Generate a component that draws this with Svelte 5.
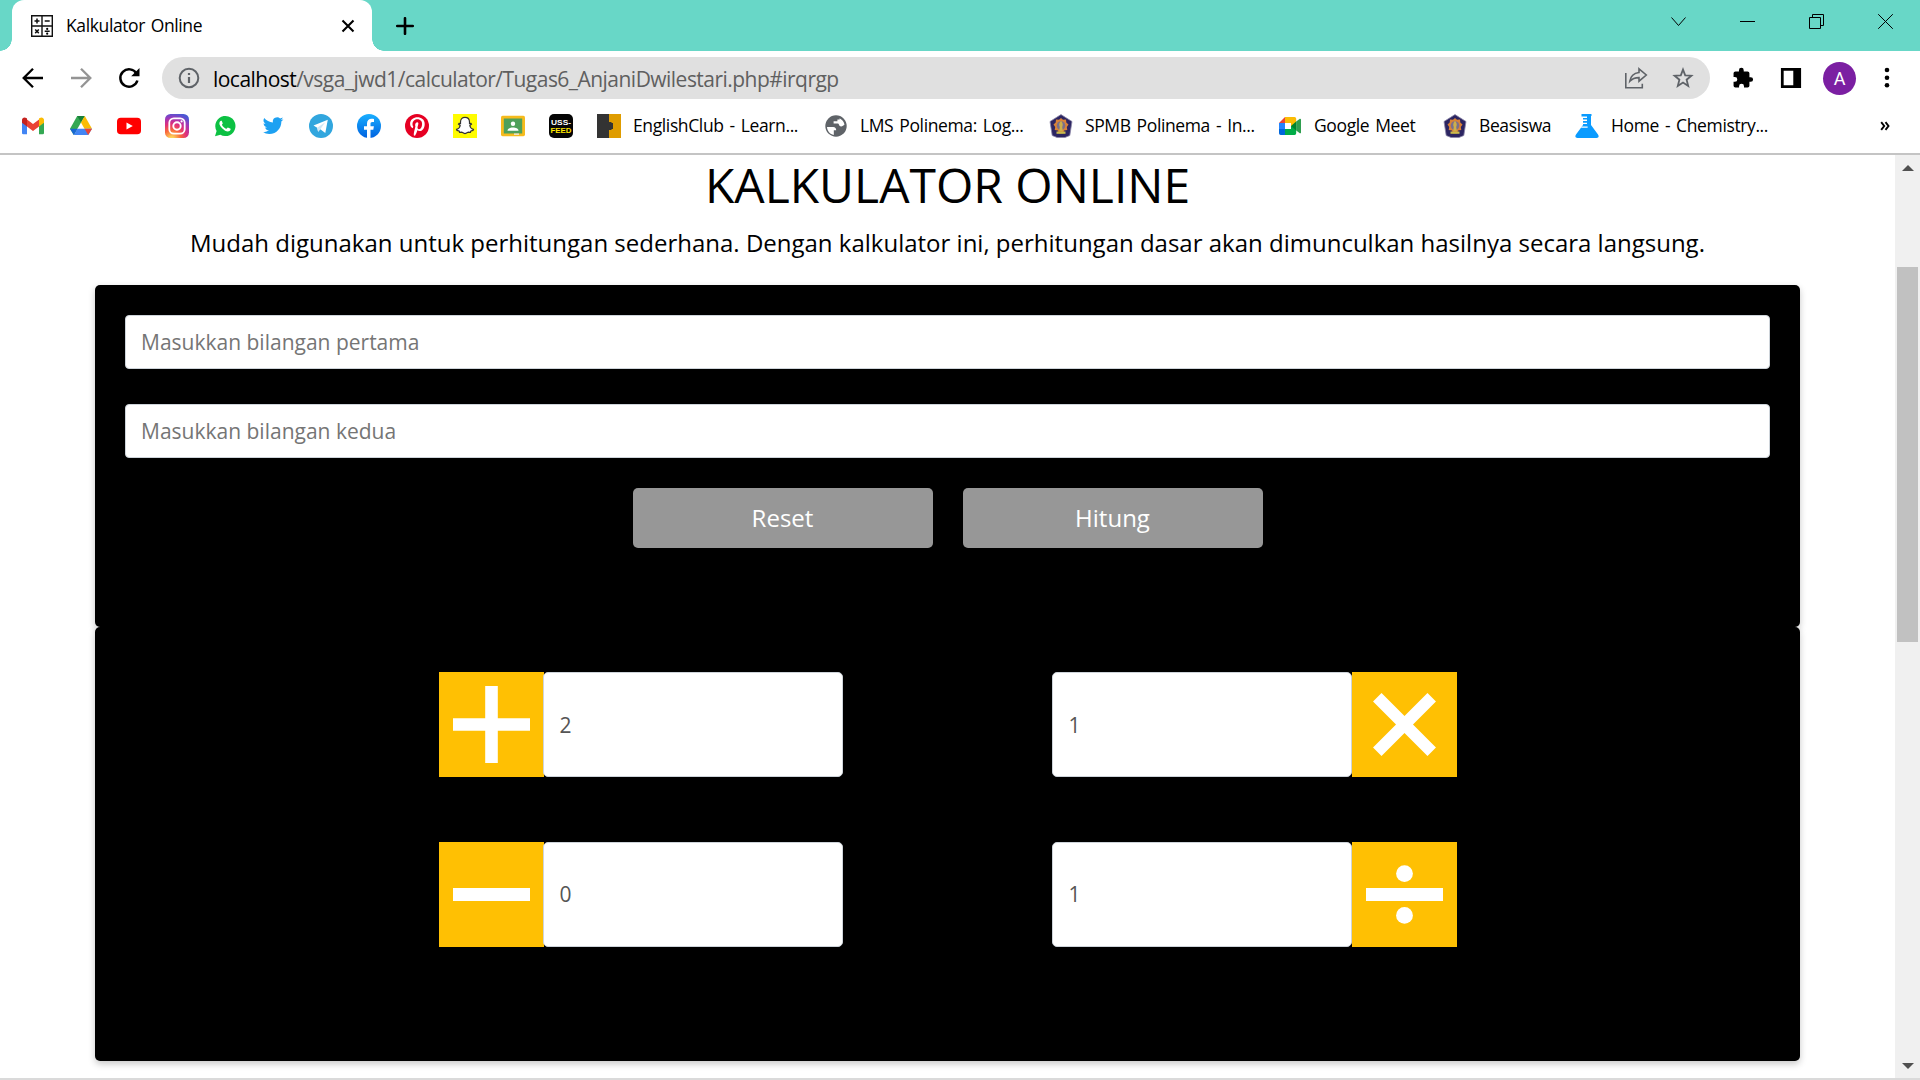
<script>
  const shortcuts = ['gmail', 'drive', 'youtube', 'instagram', 'whatsapp', 'twitter', 'telegram', 'facebook', 'pinterest', 'snapchat', 'classroom', 'uss'];

  const bookmarks = [
    { icon: 'english', label: 'EnglishClub - Learn...', size: 'w191' },
    { icon: 'globe', label: 'LMS Polinema: Log...', size: 'w189' },
    { icon: 'polinema', label: 'SPMB Polinema - In...', size: 'w193' },
    { icon: 'meet', label: 'Google Meet', size: 'w129' },
    { icon: 'polinema', label: 'Beasiswa', size: 'w96' },
    { icon: 'flask', label: 'Home - Chemistry...', size: 'w170' }
  ];

  const rows = [
    [{ op: 'plus', value: '2' }, { op: 'times', value: '1' }],
    [{ op: 'minus', value: '0' }, { op: 'divide', value: '1' }]
  ];

  let first = $state('');
  let second = $state('');
</script>

{#snippet siteIcon(name)}
  <svg class="site-icon" viewBox="0 0 24 24" aria-hidden="true">
    {#if name === 'gmail'}
      <path d="M1 6v13a1.3 1.3 0 0 0 1.3 1.3H6V10z" fill="#4285f4" />
      <path d="M18 10v10.300h3.700A1.300 1.300 0 0 0 23 19V6z" fill="#34a853" />
      <path d="M6 5.500v7L12 17l6-4.500v-7L12 10z" fill="#ea4335" />
      <path d="M1 6c0-2.400 2.600-3.300 4.300-2L6 4.600v7.900L1 8.700z" fill="#c5221f" />
      <path d="M23 6c0-2.400-2.600-3.300-4.300-2l-.7.6v7.900l5-3.800z" fill="#fbbc04" />
    {:else if name === 'drive'}
      <path d="M8.200 2h7.600L12 8.600 4.800 21 1 14.700z" fill="#34a853" />
      <path d="M8.200 2h7.600L12 8.600z" fill="#188038" />
      <path d="M15.800 2 23 14.700h-7.500L12 8.600z" fill="#fbbc04" />
      <path d="M8.500 14.700H23L19.200 21H4.800z" fill="#4285f4" />
      <path d="M15.500 14.700H23L19.200 21z" fill="#ea4335" />
      <path d="M1 14.700h7.500L4.800 21z" fill="#1967d2" />
    {:else if name === 'youtube'}
      <rect x="0" y="3.700" width="24" height="16.600" rx="3.800" fill="#ff0000" />
      <path d="m9.500 8.400 6.300 3.600-6.300 3.600z" fill="#fff" />
    {:else if name === 'instagram'}
      <defs>
        <radialGradient id="ig" cx=".28" cy="1.05" r="1.100">
          <stop offset=".08" stop-color="#fdd35a" />
          <stop offset=".35" stop-color="#f9683b" />
          <stop offset=".58" stop-color="#df2f7b" />
          <stop offset=".8" stop-color="#a136b8" />
          <stop offset="1" stop-color="#4b58d4" />
        </radialGradient>
      </defs>
      <rect width="24" height="24" rx="5.500" fill="url(#ig)" />
      <rect x="4.300" y="4.300" width="15.400" height="15.400" rx="4.500" fill="none" stroke="#fff" stroke-width="1.800" />
      <circle cx="12" cy="12" r="3.700" fill="none" stroke="#fff" stroke-width="1.900" />
      <circle cx="16.600" cy="7.400" r="1.100" fill="#fff" />
    {:else if name === 'whatsapp'}
      <path d="M2 22.200 3.600 17A10.100 10.100 0 1 1 7.400 20.800z" fill="#0cc143" />
      <path d="M8.300 6.700c-.4 0-1 .2-1.400.8-1.200 1.700-.5 4 2.200 6.700s5.400 4 7.400 2.800c.9-.5 1.300-1.500 1.100-2.200l-2.700-1.400c-.4-.1-.8.8-1.400 1.300-.6.200-3.900-2-4.600-4 .4-.6 1-1.100.8-1.500l-1-2.500z" fill="#fff" />
    {:else if name === 'twitter'}
      <path transform="translate(1.800 1.300) scale(.86)" d="M23.950 4.570a10 10 0 0 1-2.820.77 4.960 4.960 0 0 0 2.160-2.720c-.95.550-2 .95-3.130 1.190a4.920 4.920 0 0 0-8.380 4.480C7.690 8.100 4.070 6.130 1.640 3.160a4.920 4.920 0 0 0 1.520 6.570 4.900 4.900 0 0 1-2.230-.61v.06c0 2.380 1.700 4.370 3.950 4.820a5 5 0 0 1-2.210.08 4.940 4.940 0 0 0 4.600 3.420A9.870 9.870 0 0 1 0 19.540a13.990 13.990 0 0 0 7.550 2.210c9.050 0 14-7.500 14-13.980l-.02-.64a9.940 9.940 0 0 0 2.420-2.560z" fill="#1da1f2" />
    {:else if name === 'telegram'}
      <circle cx="12" cy="12" r="12" fill="#31a6de" />
      <path d="M4.500 11.500 18.800 5.700 16.300 19l-5-3.700-2.200 2.500-.9-4.100z" fill="#fff" />
      <path d="m8.200 13.700 8-5.400-4.900 7-2.200 2.500z" fill="#cfe7f5" />
    {:else if name === 'facebook'}
      <defs>
        <linearGradient id="fb" x2="0" y2="1"><stop stop-color="#19afff" /><stop offset="1" stop-color="#0062e0" /></linearGradient>
      </defs>
      <circle cx="12" cy="12" r="12" fill="url(#fb)" />
      <path d="M10 24v-8.300H7v-3.500h3V9.600c0-3.100 1.900-4.800 4.600-4.800.9 0 1.800.1 2.400.3v3h-1.600c-1.500 0-1.900.8-1.900 1.900v2.200h3.400l-.6 3.500h-2.800V24z" fill="#fff" />
    {:else if name === 'pinterest'}
      <circle cx="12" cy="12" r="12" fill="#e60023" />
      <path d="M8.900 21.500c-.3-2 .1-3.300 1.500-9 -.7-1.800.1-4.200 1.800-4.200 2.700 0-.2 4.500.4 6 .7 1.900 4.500.9 4.500-4.300 0-6.200-9.600-6.200-9.600.2 0 1.100.3 1.700.8 2.400l-.5 1.700c-1.800-.7-2.700-2.500-2.700-4.500 0-8.500 14.600-8.900 14.600.2 0 6.200-4.400 8.500-7.400 6.300-.4 2-1.400 4.200-2.300 5.500z" fill="#fff" />
    {:else if name === 'snapchat'}
      <rect width="24" height="24" fill="#fffc00" />
      <path d="M12 3.300c-2.800 0-4.500 1.900-4.500 4.600v1.700l-1.400-.3-.6.900 1.700 1.300c-.3 1.800-1.800 3.300-3.600 3.900l.4 1 2.100.6.500 1.300 2.200-.1c1.200.8 2 1.400 3.200 1.400s2-.6 3.200-1.400l2.200.1.500-1.300 2.100-.6.400-1c-1.800-.6-3.300-2.100-3.600-3.900l1.700-1.300-.6-.9-1.400.3V7.900c0-2.700-1.700-4.600-4.500-4.600z" fill="#fff" stroke="#333" stroke-width="1.200" />
    {:else if name === 'classroom'}
      <rect y="1.800" width="24" height="20.400" rx="1.600" fill="#f6bb1d" />
      <rect x="2.800" y="4.500" width="18.400" height="15" fill="#4fa05a" />
      <circle cx="12" cy="9.700" r="2.200" fill="#fff" />
      <path d="M6.500 16.700c0-4.200 11-4.200 11 0z" fill="#fff" />
      <path d="M13 19.500h5v1.300h-5z" fill="#eee" />
    {:else if name === 'uss'}
      <rect width="24" height="24" rx="5" fill="#050505" />
      <text x="12" y="11" text-anchor="middle" textLength="20" lengthAdjust="spacingAndGlyphs" class="uss-text" fill="#fff">USS-</text>
      <text x="12" y="18.800" text-anchor="middle" textLength="21" lengthAdjust="spacingAndGlyphs" class="uss-text" fill="#ffe600">FEED</text>
    {:else if name === 'english'}
      <path d="M0 0h24v24H0z" fill="#df9c00" />
      <path d="M0 0h12v8h2.500v1H16v6h-1.500v1H12v8H0z" fill="#333" />
    {:else if name === 'globe'}
      <circle cx="12" cy="12" r="10.700" fill="#5f6368" />
      <path d="M3 13h6.200c2 0 3 1.300 3 3.200H9.800v4.700C6 20.200 3.200 17 3 13zM15.600 4.300c2.400 1.300 4.300 3.500 4.900 6.300-1.300 1.800-3.800 2.400-5 1.200-.7-.7-.4-1.800-1.400-2.200H9.600V7.300h3.800V5.400h2.200z" fill="#fff" />
    {:else if name === 'polinema'}
      <path d="M12 .6 23 7.500 20.800 21.500 16 23.500H8l-4.800-2L1 7.500z" fill="#2c2562" stroke="#8d88a8" stroke-width=".8" />
      <path d="m12 4 2 1.800 3-.3.300 3 2.200 2-1.700 2.400.5 3-3.200.7-1.100 2.700h-4l-1.100-2.700-3.200-.7.500-3-1.700-2.400 2.200-2 .3-3 3 .3z" fill="#d98238" />
      <circle cx="12" cy="11.600" r="4.300" fill="#7a6f8c" />
      <path d="M12 6.700c2.100 2.200 2.100 4.500 1.200 6.200L13.800 17h-3.600l.6-4.100C9.900 11.200 9.900 8.900 12 6.700z" fill="#cdb04a" />
      <path d="M7.500 17.500h9v2.300h-9z" fill="#cbbb4c" />
    {:else if name === 'meet'}
      <path d="M1 9 7 3v6z" fill="#ea4335" />
      <path d="M7 3h9.500A1.700 1.700 0 0 1 18.200 4.700V12H13V9H7z" fill="#fbbc04" />
      <path d="M1 9h6v6H1z" fill="#2684fc" />
      <path d="M1 15h6v6H2.700A1.700 1.700 0 0 1 1 19.300z" fill="#0066da" />
      <path d="M7 15h6v-3h5.200v7.300a1.700 1.700 0 0 1-1.700 1.700H7z" fill="#00ac47" />
      <path d="M7 9h6v6H7z" fill="#fff" />
      <path d="m18.200 7.600 3.300-2.700c.7-.6 1.500-.1 1.500.7v12.800c0 .8-.8 1.300-1.500.7l-3.300-2.700z" fill="#2f9e4f" />
      <path d="M18.200 7.600v8.800L13 12z" fill="#00832d" />
    {:else if name === 'flask'}
      <path d="M6.500 0h10v2H16v9l7 9.500c1.400 2.300.3 3.500-1.500 3.500h-19C.7 24-.4 22.800 1 20.500L8 11v-1h4V8.800H8V7h4V5.500H8V4h4V2.500H6.500z" fill="#0a9bff" />
      <path d="M6.800 12.500h5.800v1.200H6z" fill="#fff" />
    {/if}
  </svg>
{/snippet}

<div class="window">
  <header>
    <div class="tabstrip">
      <div class="tab">
        <svg class="tab-icon" viewBox="0 0 24 24" aria-hidden="true">
          <path d="M1.700 1.700h20.600v20.600H1.700zM12 1.700v20.600M1.700 12h20.600" fill="none" stroke="#111" stroke-width="1.400" />
          <path d="M4.500 7h5M7 4.500v5M14.700 7h5M5.200 15.500l3.600 3.600m0-3.600-3.600 3.600M14.700 17.300h5" fill="none" stroke="#111" stroke-width="1.500" />
          <circle cx="17.200" cy="14.900" r="1.100" /><circle cx="17.200" cy="19.700" r="1.100" />
        </svg>
        <span class="tab-title">Kalkulator Online</span>
        <svg class="tab-close" viewBox="0 0 14 14" aria-label="Close tab"><path d="m1.500 1.500 11 11m0-11-11 11" stroke="#000" stroke-width="2.100" /></svg>
      </div>
      <svg class="new-tab" viewBox="0 0 18 18" aria-label="New tab"><path d="M9 1.200v15.600M1.200 9h15.600" stroke="#000" stroke-width="2.600" stroke-linecap="round" /></svg>
      <div class="window-controls">
        <svg viewBox="0 0 15 15"><path d="m.5 3.500 7 8 7-8" /></svg>
        <svg viewBox="0 0 15 15"><path d="M0 7.500h15" /></svg>
        <svg viewBox="0 0 15 15"><path d="M.5 3.500h11v11H.5zM3.500 3.500v-3h11v11h-3" /></svg>
        <svg viewBox="0 0 15 15"><path d="m.2.2 14.600 14.600m0-14.600L.2 14.800" /></svg>
      </div>
    </div>

    <div class="toolbar">
      <svg class="nav" viewBox="0 0 24 24" aria-label="Back"><path d="M22 12H3.500M12 2.700 2.700 12l9.300 9.300" fill="none" stroke="#000" stroke-width="2.300" /></svg>
      <svg class="nav" viewBox="0 0 24 24" aria-label="Forward"><path d="M2 12h18.500M12 2.700l9.300 9.300-9.300 9.300" fill="none" stroke="#949494" stroke-width="2.300" /></svg>
      <svg class="nav" viewBox="0 0 24 24" aria-label="Reload">
        <path d="M19.500 7.500A8.700 8.700 0 1 0 20.400 14.500" fill="none" stroke="#000" stroke-width="2.500" />
        <path d="M22.500 2v8.300h-8.300z" />
      </svg>
      <div class="omnibox">
        <svg class="info" viewBox="0 0 24 24"><circle cx="12" cy="12" r="9.300" fill="none" stroke="#5f6368" stroke-width="2" /><path d="M12 11v6M12 7v2.100" stroke="#5f6368" stroke-width="2.200" /></svg>
        <span class="url"><span class="host">localhost</span>/vsga_jwd1/calculator/Tugas6_AnjaniDwilestari.php#irqrgp</span>
        <svg class="share" viewBox="0 0 24 24" fill="none" stroke="#5f6368" stroke-width="1.600"><path d="M1.800 7v14.700h16.500v-4" /><path d="M15 2.800 22.300 9 15 15.200v-3.600c-4.300 0-6.800 1-9.200 3.600.8-5 3.800-8 9.200-8.700z" /></svg>
        <svg class="star" viewBox="0 0 24 24" fill="none" stroke="#5f6368" stroke-width="1.800"><path d="m12 3.600 2.200 5.700 6.200.4-4.800 4 1.600 6.300-5.200-3.500L6.800 20l1.600-6.300-4.800-4 6.200-.4z" /></svg>
      </div>
      <svg class="action" viewBox="0 0 24 24"><path d="M20.500 11.200H19V6.800a2 2 0 0 0-2-2h-4.200V3.500a2.600 2.600 0 0 0-5.200 0v1.300H3.700a2 2 0 0 0-2 2v4h1.400a2.700 2.700 0 0 1 0 5.400H1.700v4.200a2 2 0 0 0 2 2h4v-1.500a2.700 2.700 0 0 1 5.400 0v1.500H17a2 2 0 0 0 2-2v-4.200h1.500a2.500 2.500 0 0 0 0-5z" /></svg>
      <svg class="action" viewBox="0 0 24 24"><path d="M1 1h22v22H1zM4 4v16h10.500V4z" fill-rule="evenodd" /></svg>
      <span class="avatar">A</span>
      <svg class="dots" viewBox="0 0 6 24"><circle cx="3" cy="4" r="2.300" /><circle cx="3" cy="11.700" r="2.300" /><circle cx="3" cy="19.300" r="2.300" /></svg>
    </div>

    <nav class="bookmarks">
      {#each shortcuts as name}
        <span class="shortcut">{@render siteIcon(name)}</span>
      {/each}
      {#each bookmarks as b}
        <span class="bookmark">{@render siteIcon(b.icon)}<span class="label {b.size}">{b.label}</span></span>
      {/each}
      <svg class="more" viewBox="0 0 10 10"><path d="m1.200 1.200 3 3.800-3 3.800M5.500 1.200l3 3.800-3 3.800" fill="none" stroke="#000" stroke-width="1.900" /></svg>
    </nav>
  </header>

  <div class="viewport">
    <main>
      <h1>KALKULATOR ONLINE</h1>
      <p>Mudah digunakan untuk perhitungan sederhana. Dengan kalkulator ini, perhitungan dasar akan dimunculkan hasilnya secara langsung.</p>

      <section class="card form">
        <input placeholder="Masukkan bilangan pertama" bind:value={first} />
        <input placeholder="Masukkan bilangan kedua" bind:value={second} />
        <div class="buttons">
          <button type="button">Reset</button>
          <button type="button">Hitung</button>
        </div>
      </section>

      <section class="card results">
        {#each rows as row}
          <div class="row">
            {#each row as cell, i}
              <div class="result" class:flip={i === 1}>
                <svg class="op" viewBox="0 0 105 105" aria-label={cell.op}>
                  <rect width="105" height="105" fill="#ffc003" />
                  <g fill="#fff">
                    {#if cell.op === 'plus'}
                      <path d="M14 46.200h32.200V14h12.600v32.200H91v12.600H58.800V91H46.200V58.800H14z" />
                    {:else if cell.op === 'times'}
                      <path transform="rotate(45 52.500 52.500)" d="M14 46.500h32.500V14h12v32.500H91v12H58.500V91h-12V58.500H14z" />
                    {:else}
                      <path d="M14 46h77v13H14z" />
                      {#if cell.op === 'divide'}
                        <circle cx="52.500" cy="31.600" r="8.400" /><circle cx="52.500" cy="73.400" r="8.400" />
                      {/if}
                    {/if}
                  </g>
                </svg>
                <output>{cell.value}</output>
              </div>
            {/each}
          </div>
        {/each}
      </section>
    </main>

    <div class="scrollbar">
      <svg viewBox="0 0 12 6"><path d="M0 6 6 0l6 6z" /></svg>
      <div class="thumb"></div>
      <svg viewBox="0 0 12 6"><path d="m0 0 6 6 6-6z" /></svg>
    </div>
  </div>
  <div class="edge"></div>
</div>

<style>
  :global(body) { overflow: hidden; }
  * { box-sizing: border-box; }
  svg { display: block; flex: none; }

  .window {
    width: 1920px; height: 1080px;
    display: flex; flex-direction: column;
    background: #fff; color: #000;
    font-family: "Open Sans", "Noto Sans", sans-serif;
  }
  header { height: 155px; flex: none; border-bottom: 2px solid #c4c4c4; }

  .tabstrip { display: flex; height: 51px; background: #68d7c7; padding-left: 12px; }
  .tab {
    position: relative; width: 360px; height: 51px; padding: 0 17px 0 18px;
    display: flex; align-items: center;
    background: #fff; border-radius: 12px 12px 0 0;
  }
  .tab::before, .tab::after { content: ""; position: absolute; bottom: 0; width: 12px; height: 12px; }
  .tab::before { left: -12px; background: radial-gradient(circle at 0 0, transparent 11.500px, #fff 12px); }
  .tab::after { right: -12px; background: radial-gradient(circle at 100% 0, transparent 11.500px, #fff 12px); }
  .tab-icon { width: 24px; height: 24px; }
  .tab-title { margin-left: 12px; flex: 1; font-size: 17.500px; letter-spacing: -.38px; word-spacing: 1.500px; line-height: 24px; padding-bottom: 2px; white-space: nowrap; }
  .tab-close { width: 14px; height: 14px; }
  .new-tab { width: 18px; height: 18px; margin: 17px 0 0 24px; }
  .window-controls { margin-left: auto; display: flex; gap: 54px; padding: 14px 27px 0 0; }
  .window-controls svg { width: 15px; height: 15px; fill: none; stroke: #000; stroke-width: 1; }

  .toolbar { display: flex; align-items: center; height: 54px; padding: 0 30px 0 21px; }
  .nav { width: 24px; height: 24px; margin-right: 24px; }
  .nav:nth-child(3) { margin-right: 21px; }
  .omnibox {
    width: 1548px; height: 42px; border-radius: 21px; background: #e0e0e0;
    display: flex; align-items: center; padding: 0 15px;
  }
  .info { width: 24px; height: 24px; }
  .url { margin-left: 12px; flex: 1; font-size: 21px; letter-spacing: -.53px; color: #5f5f5f; white-space: nowrap; line-height: 28px; padding-top: 1px; }
  .host { color: #000; }
  .share { width: 24px; height: 24px; margin-right: 23px; }
  .star { width: 24px; height: 24px; }
  .action { width: 22px; height: 22px; margin-left: 22px; }
  .action + .action { margin-left: 26px; }
  .avatar {
    width: 33px; height: 33px; margin-left: 21px; border-radius: 50%;
    background: #7b1fa2; color: #fff; font: 18px/34px Roboto, sans-serif; text-align: center;
  }
  .dots { width: 6px; height: 24px; margin-left: auto; }

  .bookmarks { display: flex; align-items: center; height: 42px; padding: 0 30px 0 21px; }
  .shortcut { width: 48px; flex: none; }
  .site-icon { width: 24px; height: 24px; }
  .bookmark { display: flex; align-items: center; gap: 12px; }
  .label { font-size: 17.500px; letter-spacing: -.38px; word-spacing: 1.800px; line-height: 24px; padding-bottom: 2px; white-space: nowrap; }
  .w191 { width: 191px; }
  .w189 { width: 189px; }
  .w193 { width: 193px; }
  .w129 { width: 129px; }
  .w96 { width: 96px; }
  .w170 { width: 170px; }
  .more { width: 10px; height: 10px; margin-left: auto; }
  .uss-text { font: 900 7.500px "Liberation Sans", sans-serif; }

  .viewport { display: flex; flex: 1; min-height: 0; }
  main { width: 1895px; padding: 0 95px; }
  h1 { margin: 0; padding-top: 1px; font-size: 48px; font-weight: 400; line-height: 58px; text-align: center; }
  p { margin: 11px 0 0; height: 60px; font-size: 24px; line-height: 36px; text-align: center; white-space: nowrap; }

  .card { background: #000; border-radius: 5px; box-shadow: 0 3px 7px rgba(0, 0, 0, .22); }
  .form { height: 342px; padding: 30px; }
  input {
    display: block; width: 100%; height: 54px; margin: 0 0 35px; padding: 0 15px 1px;
    border: 1px solid #ced4da; border-radius: 4px; background: #fff;
    font: 21px "Open Sans", sans-serif; color: #495057;
  }
  input::placeholder { color: #757575; opacity: 1; }
  input:nth-child(2) { margin-bottom: 30px; }
  .buttons { display: flex; justify-content: center; gap: 30px; }
  button {
    width: 300px; height: 60px; padding: 0 0 2px; border: 0; border-radius: 5px;
    background: #979797; color: #fff; font: 24px "Open Sans", sans-serif;
  }

  .results { height: 434px; padding: 45px 0 0 344px; }
  .row { display: flex; gap: 209px; height: 105px; margin-bottom: 65px; }
  .result { display: flex; }
  .flip { flex-direction: row-reverse; }
  .op { width: 105px; height: 105px; }
  output {
    width: 300px; height: 105px; padding-left: 15.500px; border: 1px solid #ced4da; border-radius: 5px;
    background: #fff; color: #555; font-size: 21px; line-height: 104px;
  }
  .row:nth-child(2) output { line-height: 102px; }
  .result:not(.flip) output { margin-left: -1px; }

  .scrollbar { width: 25px; background: #f0f0f0; display: flex; flex-direction: column; align-items: center; padding: 10px 0 9px; }
  .scrollbar svg { width: 12px; height: 6px; fill: #505050; }
  .thumb { width: 21px; height: 375px; margin: 96px 0 auto; background: #c1c1c1; }
  .edge { height: 2px; flex: none; background: #dadada; }
</style>
